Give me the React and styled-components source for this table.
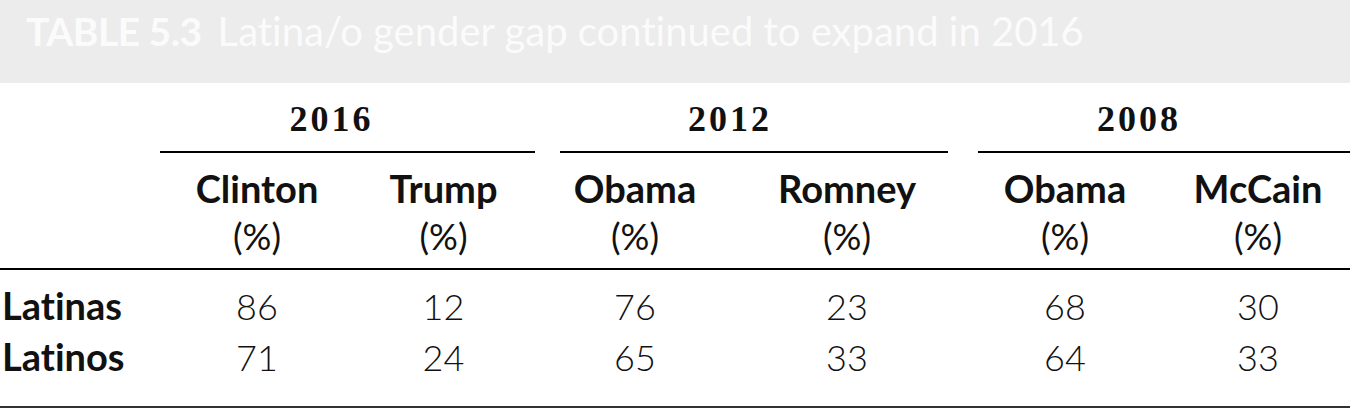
import React from 'react';
import styled, { createGlobalStyle } from 'styled-components';

const GlobalStyle = createGlobalStyle`
  html, body {
    margin: 0;
    padding: 0;
    background: #ffffff;
  }
  body {
    font-family: Lato, "Open Sans", sans-serif;
    font-variant-ligatures: none;
    color: #111;
  }
`

const COLUMNS = '160px 188px 187px 25px 194px 194px 30px 186px 186px';

const years = [
  { label: '2016', span: '2 / 4', nudge: -16 },
  { label: '2012', span: '5 / 7', nudge: -24 },
  { label: '2008', span: '8 / 10', nudge: -25 },
];

const candidates = [
  { name: 'Clinton', col: 2, nudge: 3 },
  { name: 'Trump', col: 3, nudge: 2 },
  { name: 'Obama', col: 5, nudge: -22 },
  { name: 'Romney', col: 6, nudge: -4 },
  { name: 'Obama', col: 8, nudge: -6 },
  { name: 'McCain', col: 9, nudge: 1 },
];

const rows = [
  { group: 'Latinas', values: [86, 12, 76, 23, 68, 30] },
  { group: 'Latinos', values: [71, 24, 65, 33, 64, 33] },
];

const Page = styled.div`
  width: 1350px;
  height: 412px;
  overflow: hidden;
`

const TitleBar = styled.div`
  height: 83px;
  box-sizing: border-box;
  padding: 8px 0 0 26px;
  background: #ececec;
  color: #fbfbfb;
  font-size: 39px;
  line-height: 47px;
  white-space: nowrap;
`

const TableNo = styled.span`
  font-weight: 700;
  letter-spacing: -0.5px;
  margin-right: 16px;
`

const Caption = styled.span`
  font-weight: 400;
  font-size: 40px;
`

const Band = styled.div`
  display: grid;
  grid-template-columns: ${COLUMNS};
  align-items: baseline;
  border-bottom: ${props => props.$rule || 'none'};
`

const YearCell = styled.div`
  grid-column: ${props => props.$span};
  align-self: stretch;
  height: 70px;
  box-sizing: border-box;
  display: flex;
  align-items: flex-end;
  justify-content: center;
  padding-bottom: 14px;
  padding-right: ${props => -props.$nudge * 2}px;
  border-bottom: 2px solid #000;
  font-family: "Liberation Serif", "Times New Roman", serif;
  font-weight: 700;
  font-size: 36px;
  line-height: 36px;
  letter-spacing: 3px;
`

const HeadCell = styled.div`
  grid-column: ${props => props.$col};
  padding: 11px 0 8px;
  text-align: center;
  font-size: 38px;
  line-height: 48px;
  font-weight: 700;
  ${props => props.$nudge > 0
    ? `padding-left: ${props.$nudge * 2}px;`
    : `padding-right: ${-props.$nudge * 2}px;`}
`

const Unit = styled.div`
  font-weight: 400;
  font-size: 36px;
`

const Body = styled.div`
  padding: 10px 0 24px;
  border-bottom: 2px solid #333;
`

const GroupCell = styled.div`
  grid-column: 1;
  padding-left: 2px;
  font-size: 38px;
  line-height: 50px;
  font-weight: 700;
`

const ValueCell = styled.div`
  grid-column: ${props => props.$col};
  text-align: center;
  font-size: 36px;
  line-height: 50px;
  font-weight: 300;
  ${props => props.$nudge > 0
    ? `padding-left: ${props.$nudge * 2}px;`
    : `padding-right: ${-props.$nudge * 2}px;`}
`

const App = () => {
  return (
    <Page>
      <GlobalStyle />
      <TitleBar>
        <TableNo>TABLE 5.3</TableNo>
        <Caption>Latina/o gender gap continued to expand in 2016</Caption>
      </TitleBar>
      <Band>
        {years.map(y => (
          <YearCell key={y.label} $span={y.span} $nudge={y.nudge}>{y.label}</YearCell>
        ))}
      </Band>
      <Band $rule="2px solid #000">
        {candidates.map((c, i) => (
          <HeadCell key={i} $col={c.col} $nudge={c.nudge}>
            {c.name}
            <Unit>(%)</Unit>
          </HeadCell>
        ))}
      </Band>
      <Body>
        {rows.map(r => (
          <Band key={r.group}>
            <GroupCell>{r.group}</GroupCell>
            {r.values.map((v, i) => (
              <ValueCell key={i} $col={candidates[i].col} $nudge={candidates[i].nudge}>{v}</ValueCell>
            ))}
          </Band>
        ))}
      </Body>
    </Page>
  );
}

export default App;
